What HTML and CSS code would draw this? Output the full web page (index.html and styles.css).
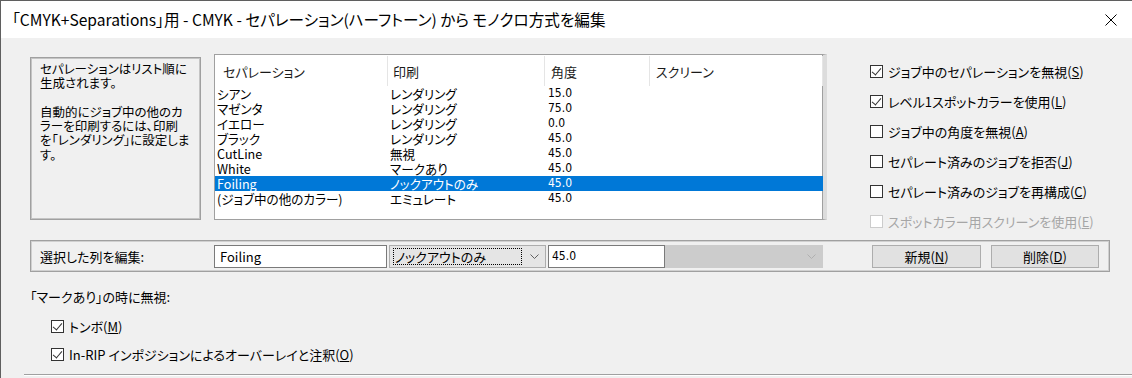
FILE: index.html
```html
<!DOCTYPE html>
<html lang="ja">
<head>
<meta charset="utf-8">
<title>CMYK</title>
<link rel="stylesheet" href="styles.css">
</head>
<body>
<div class="window">
  <div class="titlebar">
    <div class="title">「CMYK+Separations」用 - CMYK - セパレーション(ハーフトーン) から モノクロ方式を編集</div>
    <svg class="close" width="12" height="12" viewBox="0 0 12 12"><path d="M0.5 0.5 L11.5 11.5 M11.5 0.5 L0.5 11.5" stroke="#000" stroke-width="1" fill="none"/></svg>
  </div>
  <div class="content">
    <div class="top">
      <div class="info">
        <p>セパレーションはリスト順に<br>生成されます。</p>
        <p>自動的にジョブ中の他のカ<br>ラーを印刷するには、印刷<br>を「レンダリング」に設定しま<br>す。</p>
      </div>
      <div class="list">
        <div class="lhead">
          <div class="hc h1">セパレーション</div>
          <div class="hc h2">印刷</div>
          <div class="hc h3">角度</div>
          <div class="hc h4">スクリーン</div>
        </div>
        <div class="row"><span class="c1">シアン</span><span class="c2">レンダリング</span><span class="c3">15.0</span><span></span></div>
        <div class="row"><span class="c1">マゼンタ</span><span class="c2">レンダリング</span><span class="c3">75.0</span><span></span></div>
        <div class="row"><span class="c1">イエロー</span><span class="c2">レンダリング</span><span class="c3">0.0</span><span></span></div>
        <div class="row"><span class="c1">ブラック</span><span class="c2">レンダリング</span><span class="c3">45.0</span><span></span></div>
        <div class="row"><span class="c1">CutLine</span><span class="c2">無視</span><span class="c3">45.0</span><span></span></div>
        <div class="row"><span class="c1">White</span><span class="c2">マークあり</span><span class="c3">45.0</span><span></span></div>
        <div class="row sel"><span class="c1">Foiling</span><span class="c2">ノックアウトのみ</span><span class="c3">45.0</span><span></span></div>
        <div class="row"><span class="c1">(ジョブ中の他のカラー)</span><span class="c2">エミュレート</span><span class="c3">45.0</span><span></span></div>
      </div>
      <div class="checks">
        <label class="chk"><span class="box on"></span>ジョブ中のセパレーションを無視(<u>S</u>)</label>
        <label class="chk"><span class="box on"></span>レベル1スポットカラーを使用(<u>L</u>)</label>
        <label class="chk"><span class="box"></span>ジョブ中の角度を無視(<u>A</u>)</label>
        <label class="chk"><span class="box"></span>セパレート済みのジョブを拒否(<u>J</u>)</label>
        <label class="chk"><span class="box"></span>セパレート済みのジョブを再構成(<u>C</u>)</label>
        <label class="chk disabled"><span class="box"></span>スポットカラー用スクリーンを使用(<u>E</u>)</label>
      </div>
    </div>
    <div class="editgroup">
      <div class="elabel">選択した列を編集:</div>
      <div class="field f1">Foiling</div>
      <div class="combo"><span class="focus">ノックアウトのみ</span><svg class="chev" width="9" height="5" viewBox="0 0 9 5"><path d="M0.5 0.5 L4.5 4.5 L8.5 0.5" stroke="#606060" fill="none"/></svg></div>
      <div class="field f2">45.0</div>
      <div class="combo dis"><svg class="chev" width="9" height="5" viewBox="0 0 9 5"><path d="M0.5 0.5 L4.5 4.5 L8.5 0.5" stroke="#b0b0b0" fill="none"/></svg></div>
      <button class="btn b1">新規(<u>N</u>)</button>
      <button class="btn b2">削除(<u>D</u>)</button>
    </div>
    <div class="marks">
      <div class="mtitle">「マークあり」の時に無視:</div>
      <label class="chk"><span class="box on"></span>トンボ(<u>M</u>)</label>
      <label class="chk"><span class="box on"></span>In-RIP インポジションによるオーバーレイと注釈(<u>O</u>)</label>
    </div>
    <div class="bottomline"></div>
  </div>
</div>
</body>
</html>
```
FILE: styles.css
```css
* { box-sizing: border-box; }
html, body { margin: 0; padding: 0; }
body {
  width: 1132px;
  height: 378px;
  overflow: hidden;
  background: #f0f0f0;
  font-family: "Noto Sans CJK JP", "Noto Sans", sans-serif;
  font-size: 12px;
  color: #000;
  font-feature-settings: "palt";
}
.window {
  height: 378px;
  border-left: 1px solid #5f5f5f;
  border-top: 1px solid #5f5f5f;
}
.titlebar {
  height: 37px;
  background: #fff;
  display: flex;
  align-items: center;
  justify-content: space-between;
  padding-left: 11px;
  padding-right: 15px;
}
.title {
  font-size: 15.6px;
  line-height: 20px;
  padding-bottom: 1px;
}
.close { display: block; }
.content {
  padding-left: 29px;
}
.top {
  display: flex;
  align-items: flex-start;
  padding-top: 16px;
  height: 202px;
}
.info {
  margin-top: 3px;
  width: 171px;
  height: 163px;
  flex: none;
  border: 1px solid #a0a0a0;
  box-shadow: inset 0 0 0 1px #c4c4c4;
  padding: 4px 0 0 9px;
  font-size: 12.5px;
  line-height: 14.3px;
  white-space: nowrap;
}
.info p { margin: 0 0 14.3px 0; }
.list {
  margin-left: 13px;
  width: 613px;
  height: 166px;
  flex: none;
  background: #fff;
  border: 1px solid #a0a0a0;
  border-right: 4px solid #dcdcdc;
  box-shadow: inset -1px 0 0 #a0a0a0;
  padding-top: 1px;
}
.lhead, .row {
  display: grid;
  grid-template-columns: 173px 157px 105px 173px;
}
.lhead { height: 30px; }
.hc {
  display: flex;
  align-items: center;
  border-right: 1px solid #e5e5e5;
  font-size: 13px;
  color: #1a1a1a;
}
.h1 { padding-left: 8px; }
.h2 { padding-left: 5px; }
.h3 { padding-left: 6px; }
.h4 { padding-left: 6px; }
.row {
  height: 15px;
  line-height: 15px;
  white-space: nowrap;
  font-size: 12.6px;
}
.c1 { padding-left: 2px; }
.c2 { padding-left: 2px; }
.c3 { padding-left: 3px; font-size: 12px; font-family: "Liberation Sans Narrow", "DejaVu Sans Condensed", sans-serif; }
.row.sel { background: #0078d7; color: #fff; }
.checks {
  margin-left: 43px;
  padding-top: 2px;
  display: flex;
  flex-direction: column;
  font-size: 13px;
}
.chk {
  display: flex;
  align-items: center;
  height: 30px;
  white-space: nowrap;
}
.box {
  width: 13px;
  height: 13px;
  border: 1px solid #333;
  background: #fff;
  margin-right: 5px;
  position: relative;
  flex: none;
}
.box.on::after {
  content: "";
  position: absolute;
  left: 3px;
  top: 0px;
  width: 4px;
  height: 8px;
  border-right: 1.5px solid #333;
  border-bottom: 1.5px solid #333;
  transform: rotate(40deg);
}
.chk.disabled { color: #a6a6a6; }
.chk.disabled .box { border-color: #cccccc; }
.editgroup {
  width: 1080px;
  height: 32px;
  border: 1px solid #a0a0a0;
  box-shadow: inset 0 0 0 1px #d0d0d0;
  display: flex;
  align-items: center;
  padding-left: 9px;
  font-size: 13px;
}
.elabel { width: 174px; }
.field {
  height: 23px;
  background: #fff;
  border: 1px solid #7a7a7a;
  display: flex;
  align-items: center;
  padding-left: 5px;
}
.f1 { width: 173px; }
.f2 { width: 117px; margin-left: 2px; padding-left: 3px; font-size: 12px; font-family: "Liberation Sans Narrow", "DejaVu Sans Condensed", sans-serif; }
.combo {
  height: 23px;
  width: 157px;
  margin-left: 2px;
  background: #e5e5e5;
  border: 1px solid #adadad;
  display: flex;
  align-items: center;
  justify-content: space-between;
  padding: 0 6px 0 3px;
}
.combo .focus {
  border: 1px dotted #000;
  width: 129px;
  height: 17px;
  line-height: 15px;
  padding-left: 1px;
  white-space: nowrap;
}
.combo.dis {
  width: 158px;
  margin-left: 0;
  background: #cccccc;
  border-color: #cccccc;
  justify-content: flex-end;
}
.chev { display: block; }
.btn {
  height: 23px;
  border: 1px solid #adadad;
  background: #e1e1e1;
  font-family: inherit;
  font-feature-settings: "palt";
  font-size: 13px;
  padding: 0;
  color: #000;
}
.b1 { width: 109px; margin-left: 49px; }
.b2 { width: 108px; margin-left: 10px; }
.marks {
  padding-top: 16px;
  font-size: 13px;
}
.mtitle { height: 18px; line-height: 18px; margin-bottom: 6px; }
.marks .chk { height: 28px; padding-left: 21px; }
.bottomline {
  margin-top: 6px;
  margin-left: -6px;
  height: 2px;
  border-top: 1px solid #a0a0a0;
  border-bottom: 1px solid #fff;
}
```
